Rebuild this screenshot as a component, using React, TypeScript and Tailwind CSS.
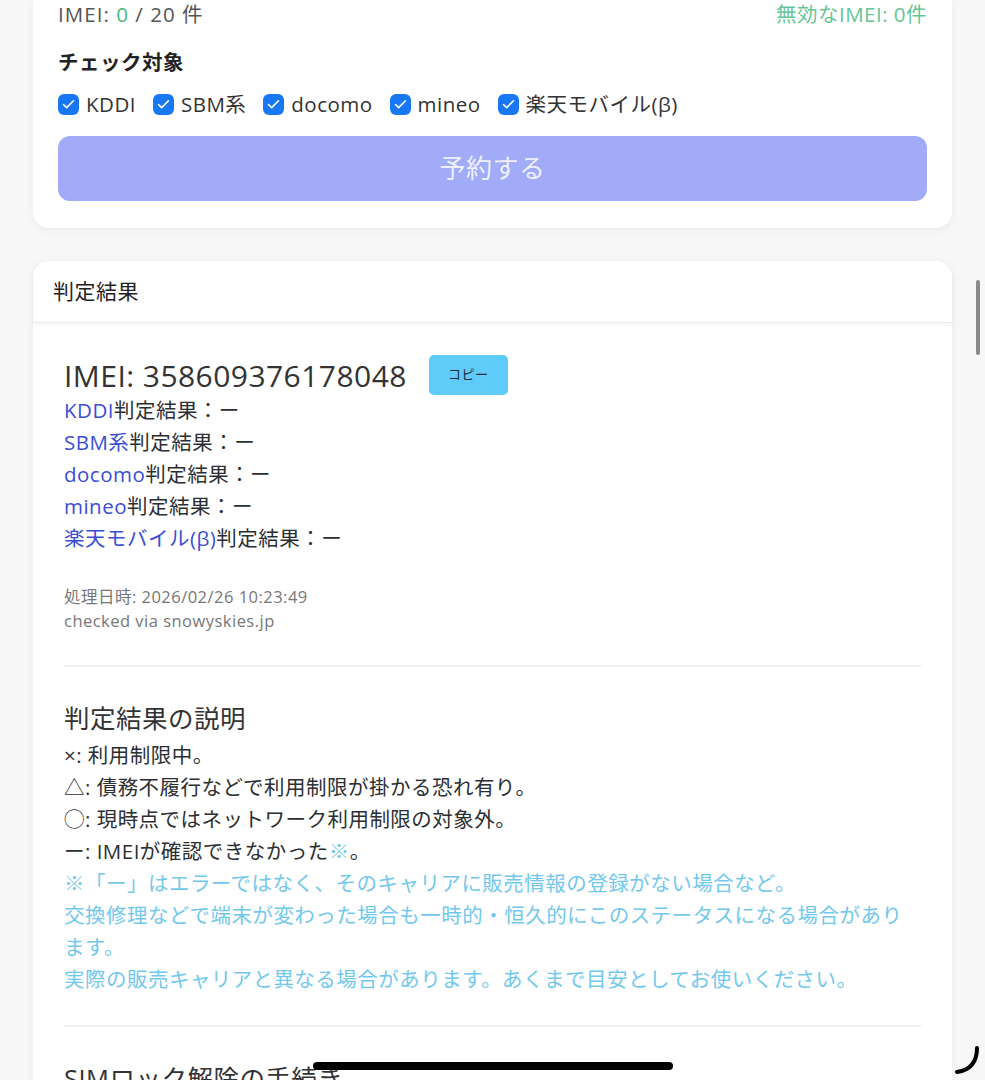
import { Check } from "lucide-react";

const carriers = ["KDDI", "SBM系", "docomo", "mineo", "楽天モバイル(β)"];

const legend = [
  "×: 利用制限中。",
  "△: 債務不履行などで利用制限が掛かる恐れ有り。",
  "◯: 現時点ではネットワーク利用制限の対象外。",
];

export default function App() {
  return (
    <div
      className="relative h-[1080px] overflow-hidden bg-[#f7f7f8] px-[33px] tracking-[0.03em] text-[#2b2f33]"
      style={{ fontFamily: '"Open Sans", "Noto Sans CJK JP", sans-serif' }}
    >
      {/* 入力カード（上部は画面外） */}
      <section className="rounded-b-2xl bg-white px-[25px] pb-[27px] shadow-[0_2px_10px_rgba(0,0,0,0.06)]">
        <div className="flex h-[28px] items-center justify-between text-[20.5px] text-[#555]">
          <p className="tracking-[0.05em]">
            IMEI: <span className="text-[#4cba7c]">0</span> / 20 件
          </p>
          <p className="text-[#66c596]">無効なIMEI: 0件</p>
        </div>

        <p className="mt-[20px] flex h-[28px] items-center text-[20.5px] font-semibold text-[#222]">チェック対象</p>

        <ul className="mt-[14px] flex h-[28px] items-center gap-[17px]">
          {carriers.map((c) => (
            <li key={c} className="flex items-center gap-[7px] text-[20.5px] text-[#333]">
              <span className="flex h-[21px] w-[21px] items-center justify-center rounded-[6px] bg-[#1877f2]">
                <Check size={15} strokeWidth={2.6} className="text-white" />
              </span>
              {c}
            </li>
          ))}
        </ul>

        <button className="mt-[18px] flex h-[65px] w-full items-center justify-center rounded-xl bg-[#a2abf8] text-[26px] text-[#eef0ff]">
          予約する
        </button>
      </section>

      {/* 判定結果カード */}
      <section className="mt-[33px] rounded-2xl bg-white shadow-[0_2px_10px_rgba(0,0,0,0.06)]">
        <header className="flex h-[62px] items-center rounded-t-2xl border-b border-[#ececec] px-[20px] text-[21px] text-[#222] shadow-[0_2px_4px_rgba(0,0,0,0.05)]">
          判定結果
        </header>

        <div className="px-[31px] pt-[32px]">
          <div className="flex h-[40px] items-center gap-[22px]">
            <h3 className="text-[30px] tracking-[0.015em] text-[#333]">IMEI: 358609376178048</h3>
            <button className="flex h-[40px] w-[79px] items-center justify-center rounded-[5px] bg-[#5ecbf8] text-[13px] text-[#1e2a3a]">
              コピー
            </button>
          </div>

          <ul className="mt-[-1px] text-[20.5px] leading-[32px]">
            {carriers.map((c) => (
              <li key={c}>
                <span className="text-[#3a4dd4]">{c}</span>判定結果：ー
              </li>
            ))}
          </ul>

          <div className="mt-[31px] text-[16.5px] leading-[24px] text-[#777]">
            <p>処理日時: 2026/02/26 10:23:49</p>
            <p>checked via snowyskies.jp</p>
          </div>

          <hr className="mt-[32px] border-t-2 border-[#f0f0f0]" />

          <h3 className="mt-[33px] text-[25.5px] leading-[36px] text-[#333]">判定結果の説明</h3>
          <div className="mt-[3px] text-[20.5px] leading-[32px]">
            {legend.map((l) => (
              <p key={l}>{l}</p>
            ))}
            <p>
              ー: IMEIが確認できなかった<span className="text-[#72c8ec]">※</span>。
            </p>
            <div className="text-[#72c8ec]">
              <p>※「ー」はエラーではなく、そのキャリアに販売情報の登録がない場合など。</p>
              <p>交換修理などで端末が変わった場合も一時的・恒久的にこのステータスになる場合があります。</p>
              <p>実際の販売キャリアと異なる場合があります。あくまで目安としてお使いください。</p>
            </div>
          </div>

          <hr className="mt-[30px] border-t-2 border-[#f0f0f0]" />

          <h3 className="mt-[33px] text-[25.5px] leading-[36px] text-[#333]">SIMロック解除の手続き</h3>
          <div className="h-[200px]" />
        </div>
      </section>

      {/* スクロールバー・ホームインジケーター（画面上のオーバーレイ） */}
      <div className="absolute right-[5px] top-[280px] h-[75px] w-[4px] rounded-full bg-[#8a8a8a]" />
      <div className="absolute left-[313px] top-[1062px] h-[8px] w-[360px] rounded-full bg-black" />
      <svg className="absolute right-[4px] top-[1044px]" width="26" height="32" viewBox="0 0 26 32" fill="none">
        <path d="M22 4 C22 18 16 26 2 28" stroke="black" strokeWidth="4" strokeLinecap="round" />
      </svg>
    </div>
  );
}
